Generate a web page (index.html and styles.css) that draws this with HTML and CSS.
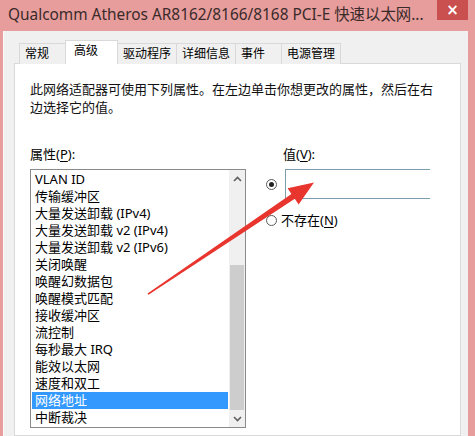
FILE: index.html
```html
<!DOCTYPE html>
<html lang="zh-CN">
  <head>
    <meta charset="utf-8">
    <title>Qualcomm Atheros AR8162/8166/8168 PCI-E 快速以太网控制器 属性</title>
    <link rel="stylesheet" href="styles.css">
  </head>
  <body>
    <div class="window">
      <div class="titlebar">
        <div class="title">Qualcomm Atheros AR8162/8166/8168 PCI-E 快速以太网...</div>
        <button class="close-btn">×</button>
      </div>

      <div class="dialog">
        <div class="tabs">
          <div class="tab short">常规</div>
          <div class="tab active">高级</div>
          <div class="tab">驱动程序</div>
          <div class="tab">详细信息</div>
          <div class="tab short">事件</div>
          <div class="tab">电源管理</div>
        </div>

        <div class="tab-panel">
          <p class="desc">此网络适配器可使用下列属性。在左边单击你想更改的属性，然后在右边选择它的值。</p>

          <div class="props">
            <div class="prop-col">
              <div class="label">属性(<u>P</u>):</div>
              <div class="listbox">
                <ul class="items">
                  <li>VLAN ID</li>
                  <li>传输缓冲区</li>
                  <li>大量发送卸载 (IPv4)</li>
                  <li>大量发送卸载 v2 (IPv4)</li>
                  <li>大量发送卸载 v2 (IPv6)</li>
                  <li>关闭唤醒</li>
                  <li>唤醒幻数据包</li>
                  <li>唤醒模式匹配</li>
                  <li>接收缓冲区</li>
                  <li>流控制</li>
                  <li>每秒最大 IRQ</li>
                  <li>能效以太网</li>
                  <li>速度和双工</li>
                  <li class="selected">网络地址</li>
                  <li>中断裁决</li>
                </ul>
                <div class="scrollbar">
                  <div class="sb-btn">
                    <svg width="9" height="6" viewBox="0 0 9 6"><path d="M1 5 L4.5 1.5 L8 5" fill="none" stroke="#606060" stroke-width="1.6"/></svg>
                  </div>
                  <div class="sb-track">
                    <div class="sb-thumb"></div>
                  </div>
                  <div class="sb-btn">
                    <svg width="9" height="6" viewBox="0 0 9 6"><path d="M1 1 L4.5 4.5 L8 1" fill="none" stroke="#606060" stroke-width="1.6"/></svg>
                  </div>
                </div>
              </div>
            </div>

            <div class="value-col">
              <div class="label value-label">值(<u>V</u>):</div>
              <div class="radio-row">
                <span class="radio checked"></span>
                <div class="value-input"></div>
              </div>
              <div class="radio-row">
                <span class="radio"></span>
                <span class="radio-text">不存在(<u>N</u>)</span>
              </div>
            </div>
          </div>
        </div>
      </div>

      <svg class="arrow" width="475" height="436" viewBox="0 0 475 436">
        <polygon points="147.5,293.4 291.4,194.0 287.6,188.2 314,182.5 298.6,204.4 294.8,198.8 148.5,294.8" fill="#e8352e"/>
      </svg>
    </div>
  </body>
</html>
```

FILE: styles.css
```css
body {
  margin: 0;
  padding: 0;
  background: #fff;
  font-family: "Noto Sans", "Noto Sans CJK SC", sans-serif;
  color: #000;
}

.window {
  position: relative;
  width: 475px;
  height: 436px;
  background: #e69d9c;
  display: flex;
  flex-direction: column;
  overflow: hidden;
}

/* Title bar */
.titlebar {
  height: 31px;
  display: flex;
  align-items: flex-start;
  flex-shrink: 0;
}

.title {
  flex: 1;
  padding: 4px 0 0 8px;
  font-size: 15.4px;
  line-height: 22px;
  color: #3a2a2a;
  white-space: nowrap;
}

.close-btn {
  width: 31px;
  height: 20px;
  margin-right: 7px;
  border: none;
  background: #c9504e;
  color: #fff;
  font-size: 15px;
  font-weight: bold;
  line-height: 18px;
  padding: 0;
  font-family: "DejaVu Sans", sans-serif;
}

/* Dialog body */
.dialog {
  flex: 1;
  margin: 0 7px 0 3px;
  background: #f0f0f0;
  border-left: 1px solid #fafafa;
  padding: 9px 7px 0 10px;
  display: flex;
  flex-direction: column;
}

.tabs {
  display: flex;
  align-items: flex-end;
  padding-left: 6px;
  height: 24px;
  position: relative;
  z-index: 1;
  margin-bottom: -1px;
}

.tab {
  height: 20px;
  padding: 0 5px;
  font-size: 12px;
  line-height: 20px;
  border: 1px solid #d9d9d9;
  border-bottom: none;
  background: #f0f0f0;
  margin-left: -1px;
  color: #000;
}

.tab.short {
  padding: 0 16px 0 5px;
}

.tab.active {
  height: 23px;
  background: #fff;
  padding: 0 19px 0 8px;
  line-height: 19px;
}

.tab-panel {
  flex: 1;
  background: #fff;
  border: 1px solid #d9d9d9;
  padding: 16px 14px 0 15px;
}

.desc {
  margin: 0;
  font-size: 13px;
  line-height: 18px;
  width: 408px;
  color: #111;
}

.props {
  display: flex;
  margin-top: 30px;
}

.label {
  font-size: 13px;
  line-height: 16px;
  height: 23px;
}

.label u,
.radio-text u {
  text-decoration-thickness: 1px;
  text-underline-offset: 2px;
}

.prop-col {
  width: 216px;
}

.listbox {
  height: 257px;
  border: 1px solid #8a8a8a;
  display: flex;
  background: #fff;
}

.items {
  flex: 1;
  list-style: none;
  margin: 0;
  padding: 1px 1px 0 1px;
}

.items li {
  height: 17px;
  line-height: 17px;
  font-size: 13px;
  padding-left: 3px;
  white-space: nowrap;
}

.items li.selected {
  background: #3399ff;
  color: #fff;
}

.scrollbar {
  width: 16px;
  background: #f0f0f0;
  display: flex;
  flex-direction: column;
}

.sb-btn {
  height: 17px;
  display: flex;
  align-items: center;
  justify-content: center;
}

.sb-track {
  flex: 1;
  display: flex;
  flex-direction: column;
  justify-content: flex-end;
}

.sb-thumb {
  height: 145px;
  margin: 0 1px;
  background: #cdcdcd;
}

/* Value column */
.value-col {
  margin-left: 19px;
  width: 175px;
}

.value-label {
  margin-left: 18px;
}

.radio-row {
  display: flex;
  align-items: center;
}

.radio-row + .radio-row {
  margin-top: 13px;
}

.radio {
  width: 11px;
  height: 11px;
  border: 1px solid #5a5a5a;
  border-radius: 50%;
  background: #fff;
  box-sizing: border-box;
  display: flex;
  align-items: center;
  justify-content: center;
  flex-shrink: 0;
  margin-left: 1px;
}

.radio.checked::after {
  content: "";
  width: 5px;
  height: 5px;
  border-radius: 50%;
  background: #222;
}

.value-input {
  margin-left: 8px;
  width: 144px;
  height: 28px;
  border: 1px solid #7d9cac;
  border-right: none;
}

.radio-text {
  font-size: 13px;
  line-height: 16px;
  margin-left: 4px;
}

.arrow {
  position: absolute;
  left: 0;
  top: 0;
  pointer-events: none;
}
```
